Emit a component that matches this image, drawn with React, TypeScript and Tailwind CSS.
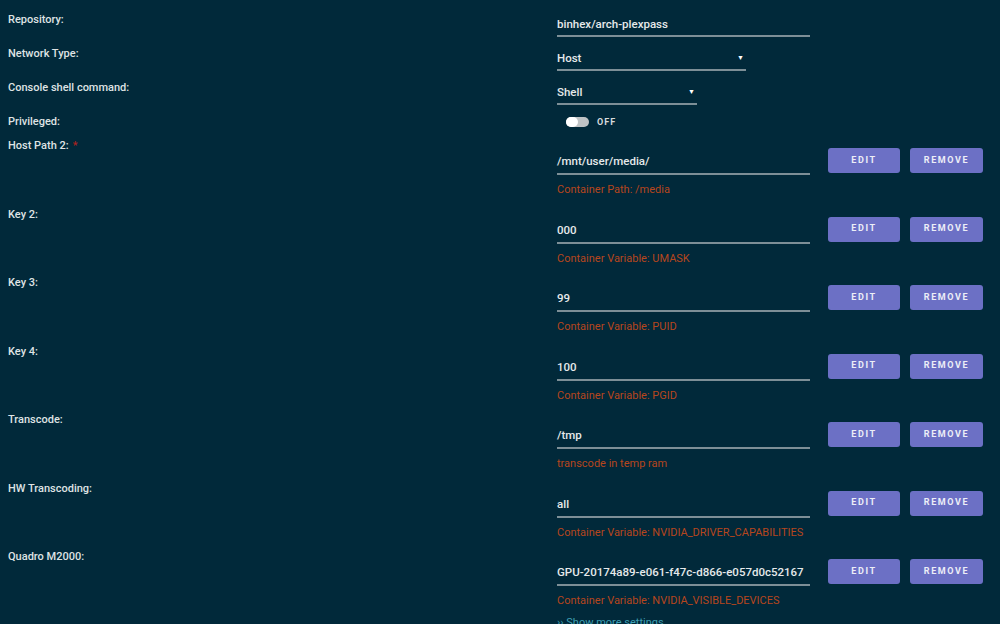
const rows = [
  { label: 'Host Path 2:', required: true, value: '/mnt/user/media/', desc: 'Container Path: /media' },
  { label: 'Key 2:', value: '000', desc: 'Container Variable: UMASK' },
  { label: 'Key 3:', value: '99', desc: 'Container Variable: PUID' },
  { label: 'Key 4:', value: '100', desc: 'Container Variable: PGID' },
  { label: 'Transcode:', value: '/tmp', desc: 'transcode in temp ram' },
  { label: 'HW Transcoding:', value: 'all', desc: 'Container Variable: NVIDIA_DRIVER_CAPABILITIES' },
  { label: 'Quadro M2000:', value: 'GPU-20174a89-e061-f47c-d866-e057d0c52167', desc: 'Container Variable: NVIDIA_VISIBLE_DEVICES' },
];

const font = { fontFamily: 'Roboto, "Liberation Sans", sans-serif' };

function Label({ children, required }: { children: React.ReactNode; required?: boolean }) {
  return (
    <div className="w-[549px] shrink-0 pt-[10px] text-[11px] leading-[14px] font-medium text-[#dfe3e4]">
      {children}
      {required && <span className="ml-1 text-[#b0231f]">*</span>}
    </div>
  );
}

function Btn({ children, w }: { children: string; w: string }) {
  return (
    <button
      className={`${w} h-[25px] rounded-[3px] bg-[#6c70c5] text-[9px] font-bold tracking-[1.6px] text-[#eceef7]`}
    >
      {children}
    </button>
  );
}

export default function App() {
  return (
    <div className="h-screen w-full overflow-hidden bg-[#01293a] px-2 pt-[3px]" style={font}>
      {/* simple rows */}
      <div className="flex h-[34px]">
        <Label>Repository:</Label>
        <div className="w-[253px] h-[34px] pt-[13px] border-b-2 border-[#7d8f97] text-[11.5px] leading-[16px] font-medium text-[#e6e9ea]">
          binhex/arch-plexpass
        </div>
      </div>
      <div className="flex h-[34px]">
        <Label>Network Type:</Label>
        <div className="w-[189px] h-[34px] pt-[13px] border-b-2 border-[#7d8f97] flex justify-between pr-[2px] text-[11.5px] leading-[16px] font-medium text-[#e6e9ea]">
          <span>Host</span>
          <span className="text-[7px] text-white">▼</span>
        </div>
      </div>
      <div className="flex h-[34px]">
        <Label>Console shell command:</Label>
        <div className="w-[140px] h-[34px] pt-[13px] border-b-2 border-[#7d8f97] flex justify-between pr-[2px] text-[11.5px] leading-[16px] font-medium text-[#e6e9ea]">
          <span>Shell</span>
          <span className="text-[7px] text-white">▼</span>
        </div>
      </div>
      <div className="flex h-[24px]">
        <Label>Privileged:</Label>
        <div className="flex items-center gap-2 pl-[9px] pt-[9px]">
          <div className="relative w-[23px] h-[10px] rounded-full bg-[#bfc3c5]">
            <div className="absolute left-0 top-0 w-[12px] h-[10px] rounded-full bg-white" />
          </div>
          <span className="text-[9px] leading-[10px] font-bold tracking-[1px] text-[#d6dadb]">OFF</span>
        </div>
      </div>

      {rows.map((r) => (
        <div key={r.label} className="flex h-[68.5px]">
          <Label required={r.required}>{r.label}</Label>
          <div className="flex items-start">
            <div className="w-[253px]">
              <div className="h-[46px] pt-[24px] border-b-2 border-[#7d8f97] text-[11.5px] leading-[16px] font-medium text-[#e6e9ea]">
                {r.value}
              </div>
              <div className="mt-[8px] text-[11px] leading-[14px] text-[#b6461d]">{r.desc}</div>
            </div>
            <div className="ml-[18px] mt-[19px] flex gap-[10px]">
              <Btn w="w-[72px]">EDIT</Btn>
              <Btn w="w-[73px]">REMOVE</Btn>
            </div>
          </div>
        </div>
      ))}

      <div className="flex">
        <div className="w-[549px] shrink-0" />
        <div className="mt-[7px] text-[11px] leading-[14px] text-[#3e9fb2]">›› Show more settings ...</div>
      </div>
    </div>
  );
}
